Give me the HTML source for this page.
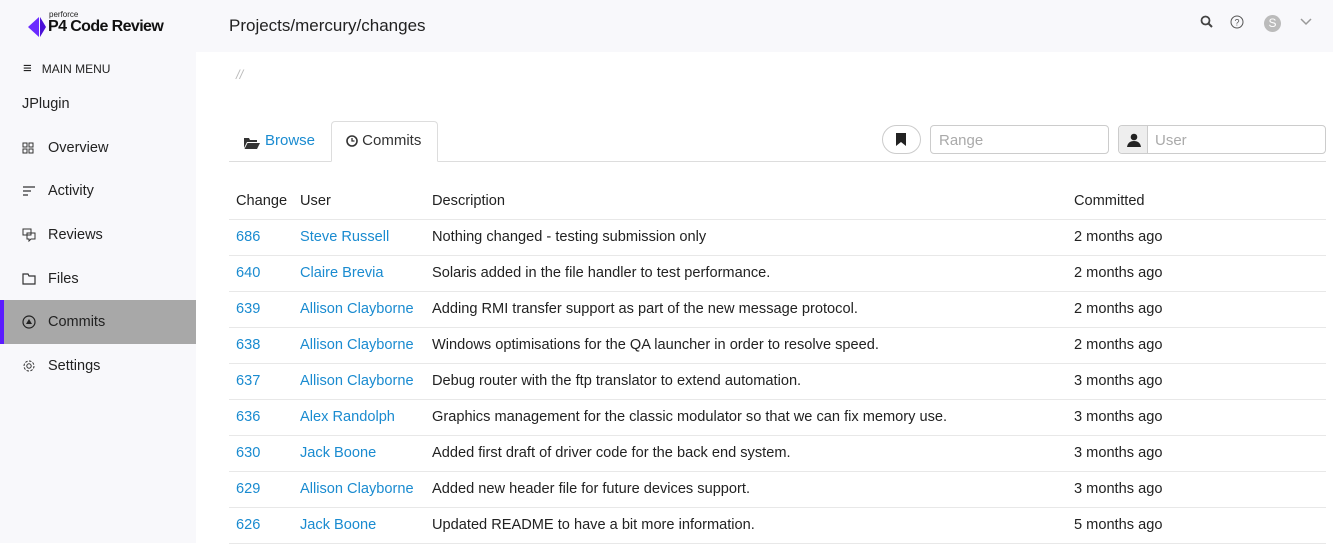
<!DOCTYPE html>
<html><head><meta charset="utf-8"><style>
*{box-sizing:border-box;margin:0;padding:0}
body{width:1333px;height:543px;overflow:hidden;background:#fff;font-family:"Liberation Sans",sans-serif;color:#333;position:relative}
.side{position:absolute;left:0;top:0;width:196px;height:543px;background:#f8f8fb}
.top{position:absolute;left:196px;top:0;right:0;height:52px;background:#f8f8fb}
.logo{position:absolute;left:27px;top:10px}
.nav{position:absolute;left:0;width:196px;height:44px;font-size:14.5px;color:#222;display:flex;align-items:center;padding-left:48px}
.nav svg{position:absolute;left:22px}
.sel{background:#a8a8a8;border-left:4px solid #5b1cff}
a{color:#1a8bd0}
.tab{position:absolute;font-size:15px}
.inp{position:absolute;top:125px;height:29px;border:1px solid #ccc;border-radius:4px;font-size:15px;color:#aaa;padding:6px 8px}
table{position:absolute;left:229px;top:184px;width:1097px;border-collapse:collapse;font-size:14.6px}
td,th{height:36px;text-align:left;font-weight:normal;padding-left:7px;border-bottom:1px solid #e8e8e8;color:#222}
th{height:35px}
td a{color:#1a8bd0}
</style></head><body>
<div class="side">
<div class="logo">
<svg width="20" height="22" viewBox="0 0 20 22" style="position:absolute;left:0;top:6px"><path d="M12 1 L1 11 L12 21 Z M12 6 L6 11 L12 16" fill="#6b2bff"/><path d="M13 1 V21 L19 11 Z" fill="#4a10d8"/></svg>
<div style="position:absolute;left:22px;top:0;font-size:8px;color:#222">perforce</div>
<div style="position:absolute;left:21px;top:8px;font-size:16px;font-weight:bold;color:#111;white-space:nowrap;letter-spacing:-0.6px">P4 Code Review</div>
</div>
<div style="position:absolute;left:23px;top:60px;font-size:12px;color:#222"><span style="font-size:15px;margin-right:10px">&#8801;</span>MAIN MENU</div>
<div style="position:absolute;left:22px;top:96px;font-size:14.5px;color:#222">JPlugin</div>
<div class="nav" style="top:126px"><svg width="12" height="12"><rect x="1" y="1" width="4" height="4" fill="none" stroke="#333"/><rect x="7" y="1" width="4" height="4" fill="none" stroke="#333"/><rect x="1" y="7" width="4" height="4" fill="none" stroke="#333"/><rect x="7" y="7" width="4" height="4" fill="none" stroke="#333"/></svg>Overview</div>
<div class="nav" style="top:169px"><svg width="14" height="12"><path d="M1 2H13M1 6H9M1 10H6" stroke="#333" stroke-width="1.3"/></svg>Activity</div>
<div class="nav" style="top:213px"><svg width="15" height="14"><path d="M1 1H9V7H1Z M5 5H13V11H9L7 13V11H5Z" fill="none" stroke="#333"/></svg>Reviews</div>
<div class="nav" style="top:257px"><svg width="14" height="12"><path d="M1 1H6L7 3H13V11H1Z" fill="none" stroke="#333" stroke-width="1.2"/></svg>Files</div>
<div class="nav sel" style="top:300px;padding-left:44px"><svg width="14" height="14" style="left:18px"><circle cx="7" cy="7" r="6" fill="none" stroke="#222" stroke-width="1.2"/><path d="M4 9L7 4L10 9Z" fill="#222"/></svg>Commits</div>
<div class="nav" style="top:344px"><svg width="14" height="14"><circle cx="7" cy="7" r="2.2" fill="none" stroke="#333"/><circle cx="7" cy="7" r="5" fill="none" stroke="#333" stroke-dasharray="2.5 1.4"/></svg>Settings</div>
</div>
<div class="top">
<div style="position:absolute;left:33px;top:16px;font-size:17px;color:#222">Projects/mercury/changes</div>
<svg width="14" height="14" style="position:absolute;left:1004px;top:15px"><circle cx="5.5" cy="5.5" r="4" fill="none" stroke="#444" stroke-width="1.8"/><path d="M8.5 8.5L12 12" stroke="#444" stroke-width="2"/></svg>
<svg width="14" height="14" style="position:absolute;left:1034px;top:15px"><circle cx="7" cy="7" r="6" fill="none" stroke="#555"/><text x="7" y="10.5" font-size="9" text-anchor="middle" fill="#555" font-family="Liberation Sans">?</text></svg>
<div style="position:absolute;left:1068px;top:15px;width:17px;height:17px;border-radius:50%;background:#bbb;color:#fff;font-size:12px;text-align:center;line-height:17px">S</div>
<svg width="12" height="8" style="position:absolute;left:1104px;top:18px"><path d="M1 1L6 6L11 1" fill="none" stroke="#999" stroke-width="1.5"/></svg>
</div>
<div style="position:absolute;left:236px;top:67px;font-size:13px;color:#bbb;font-style:italic">//</div>
<div style="position:absolute;left:229px;top:161px;width:1097px;border-top:1px solid #ddd"></div>
<svg width="16" height="12" style="position:absolute;left:244px;top:137px"><path d="M0 1H5L6 3H13V5H3L0 11Z M3.5 6H16L13 12H0.5Z" fill="#333"/></svg>
<div class="tab" style="left:265px;top:132px"><a>Browse</a></div>
<div style="position:absolute;left:331px;top:121px;width:107px;height:41px;border:1px solid #ddd;border-bottom:1px solid #fff;border-radius:4px 4px 0 0;background:#fff"></div>
<div class="tab" style="left:346px;top:132px;color:#333"><svg width="12" height="12" style="vertical-align:-2px"><circle cx="6" cy="6" r="5" fill="none" stroke="#333" stroke-width="1.6"/><path d="M6 3V6H8.5" fill="none" stroke="#333" stroke-width="1.3"/></svg> Commits</div>
<div style="position:absolute;left:882px;top:125px;width:39px;height:29px;border:1px solid #ccc;border-radius:15px"><svg width="10" height="13" style="position:absolute;left:13px;top:7px"><path d="M0 0H10V13L5 9L0 13Z" fill="#222"/></svg></div>
<div class="inp" style="left:930px;width:179px">Range</div>
<div class="inp" style="left:1118px;width:208px;padding-left:36px">User<div style="position:absolute;left:0;top:0;width:29px;height:27px;background:#eee;border-right:1px solid #ccc;border-radius:4px 0 0 4px"><svg width="14" height="14" style="position:absolute;left:8px;top:7px"><circle cx="7" cy="4" r="3.3" fill="#222"/><path d="M0 14Q1 8 7 8Q13 8 14 14Z" fill="#222"/></svg></div></div>
<table>
<tr><th style="width:64px">Change</th><th style="width:132px">User</th><th style="width:642px">Description</th><th>Committed</th></tr>
<tr><td><a>686</a></td><td><a>Steve Russell</a></td><td>Nothing changed - testing submission only</td><td>2 months ago</td></tr>
<tr><td><a>640</a></td><td><a>Claire Brevia</a></td><td>Solaris added in the file handler to test performance.</td><td>2 months ago</td></tr>
<tr><td><a>639</a></td><td><a>Allison Clayborne</a></td><td>Adding RMI transfer support as part of the new message protocol.</td><td>2 months ago</td></tr>
<tr><td><a>638</a></td><td><a>Allison Clayborne</a></td><td>Windows optimisations for the QA launcher in order to resolve speed.</td><td>2 months ago</td></tr>
<tr><td><a>637</a></td><td><a>Allison Clayborne</a></td><td>Debug router with the ftp translator to extend automation.</td><td>3 months ago</td></tr>
<tr><td><a>636</a></td><td><a>Alex Randolph</a></td><td>Graphics management for the classic modulator so that we can fix memory use.</td><td>3 months ago</td></tr>
<tr><td><a>630</a></td><td><a>Jack Boone</a></td><td>Added first draft of driver code for the back end system.</td><td>3 months ago</td></tr>
<tr><td><a>629</a></td><td><a>Allison Clayborne</a></td><td>Added new header file for future devices support.</td><td>3 months ago</td></tr>
<tr><td><a>626</a></td><td><a>Jack Boone</a></td><td>Updated README to have a bit more information.</td><td>5 months ago</td></tr>
</table>
</body></html>
